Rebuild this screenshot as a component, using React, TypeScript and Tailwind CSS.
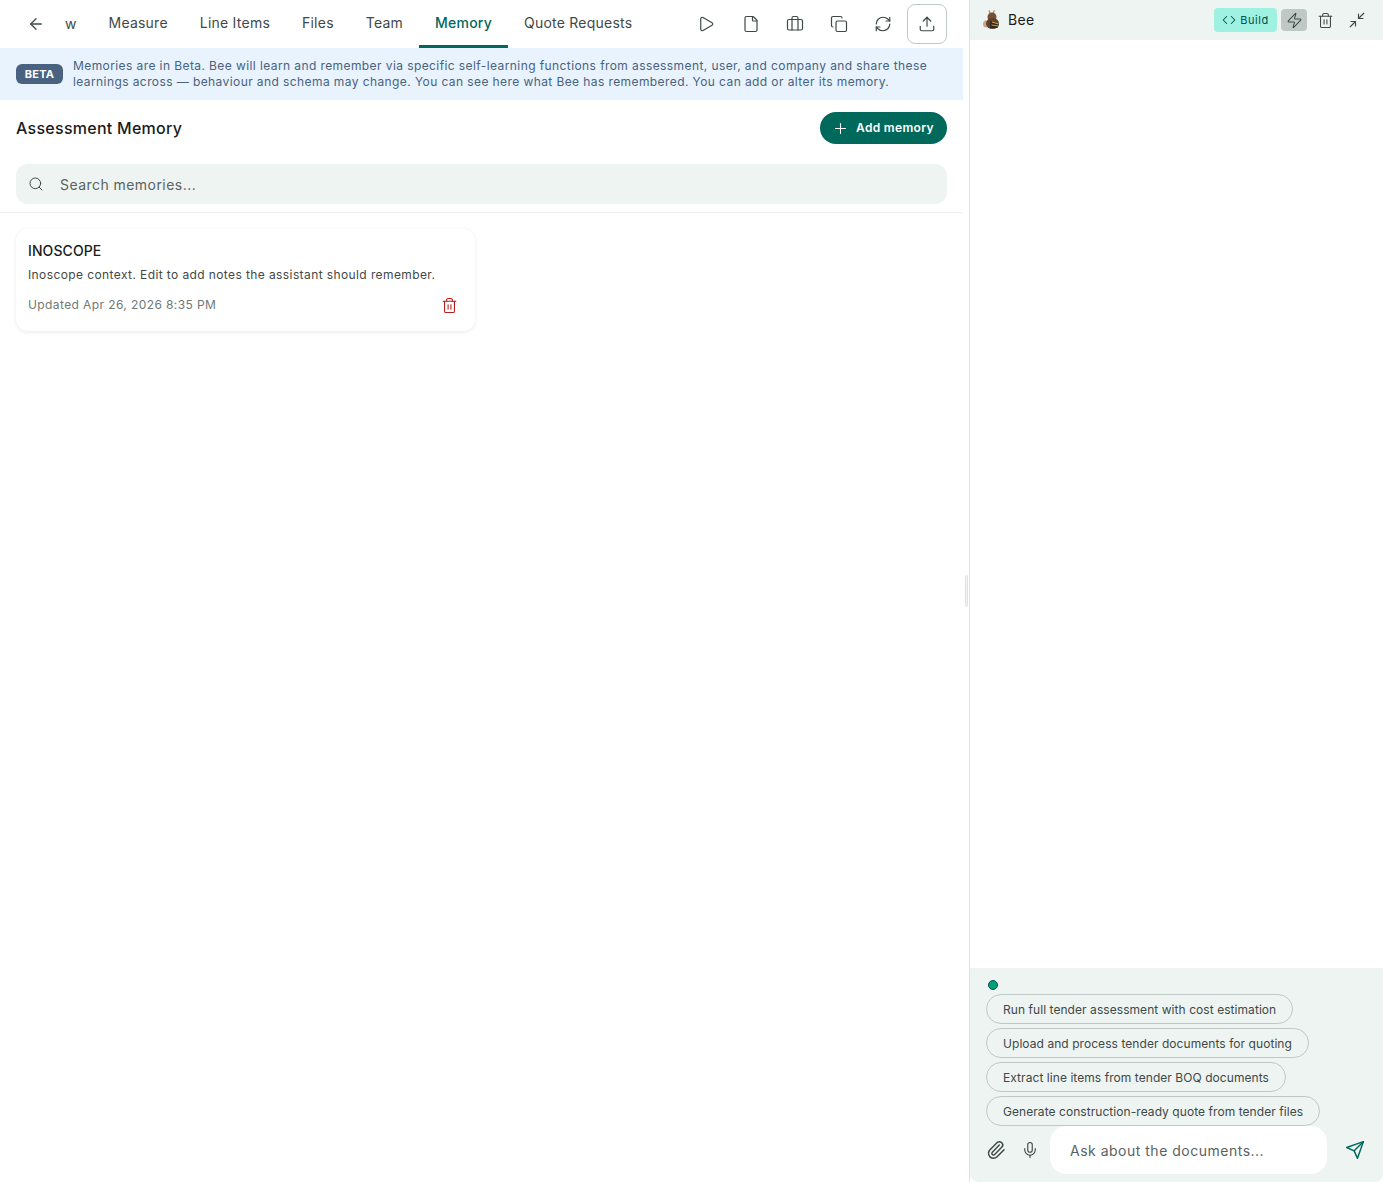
import { ArrowLeft, Briefcase, Code, Copy, File, Mic, Minimize2, Paperclip, Play, Plus, RefreshCw, Search, Trash2, Upload, Zap } from "lucide-react";

const tabs = ["Measure", "Line Items", "Files", "Team"];
const prompts = [
  "Run full tender assessment with cost estimation",
  "Upload and process tender documents for quoting",
  "Extract line items from tender BOQ documents",
  "Generate construction-ready quote from tender files",
];

function BeeLogo() {
  return (
    <svg width="20" height="22" viewBox="0 0 20 22" className="shrink-0">
      <path d="M8 4 L7 1.5 M11 4 L12.5 1.5" stroke="#b8862d" strokeWidth="1.2" fill="none" />
      <ellipse cx="4" cy="15" rx="3" ry="3.5" fill="#c9a58c" />
      <ellipse cx="10" cy="8" rx="4.5" ry="4.5" fill="#7a4e34" />
      <ellipse cx="10.5" cy="14.5" rx="6.5" ry="5.5" fill="#63402b" />
      <path d="M8 12 L17 15 L15.5 19 L8 19 Z" fill="#2b2a28" />
      <path d="M10 13 L16.5 15 M9.5 16 L16.5 17" stroke="#d29a2c" strokeWidth="1.2" fill="none" />
    </svg>
  );
}

function SendIcon() {
  return (
    <svg width="20" height="20" viewBox="0 0 24 24" fill="none" stroke="#00695c" strokeWidth="1.75" strokeLinejoin="round" strokeLinecap="round" className="ml-[18px]">
      <path d="M22 2 15 22l-4-9-9-4Z" />
      <path d="M22 2 11 13" />
    </svg>
  );
}

export default function App() {
  return (
    <div className="flex h-[1182px] w-[1383px] overflow-hidden bg-white font-['Inter',sans-serif] antialiased">
      <div className="flex h-full w-[963px] shrink-0 flex-col">
        <div className="flex h-12 items-center">
          <ArrowLeft size={18} strokeWidth={1.75} className="ml-[27px] text-[#3f4947]" />
          <div className="ml-[20px] w-[11px] text-sm tracking-[0.23px] text-[#3f4947]">w</div>
          <div className="ml-[16.5px] flex h-full items-center">
            {tabs.map((t) => (
              <div key={t} className="flex h-full items-center px-4 pb-0.5 text-sm tracking-[0.23px] text-[#3f4947]">{t}</div>
            ))}
            <div className="flex h-full items-center border-b-[3px] border-[#00695c] px-4 text-sm font-medium tracking-[0.23px] text-[#00695c]">Memory</div>
            <div className="flex h-full items-center px-4 pb-0.5 text-sm tracking-[0.23px] text-[#3f4947]">Quote Requests</div>
          </div>
          <div className="ml-auto mr-4 flex items-center">
            <div className="flex w-[44px] justify-center"><Play size={18} strokeWidth={1.6} className="-translate-x-px text-[#3f4947]" /></div>
            <div className="flex w-[44px] justify-center"><File size={18} strokeWidth={1.6} className="text-[#3f4947]" /></div>
            <div className="flex w-[44px] justify-center"><Briefcase size={18} strokeWidth={1.6} className="text-[#3f4947]" /></div>
            <div className="flex w-[44px] justify-center"><Copy size={18} strokeWidth={1.6} className="text-[#3f4947]" /></div>
            <div className="flex w-[44px] justify-center"><RefreshCw size={18} strokeWidth={1.6} className="text-[#3f4947]" /></div>
            <div className="ml-[2px] flex h-10 w-10 items-center justify-center rounded-lg border border-[#bfc9c6]"><Upload size={18} strokeWidth={1.6} className="text-[#3f4947]" /></div>
          </div>
        </div>
        <div className="flex h-[52px] items-center gap-[10px] bg-[#e8f3fd] px-4">
          <div className="flex h-5 w-[47px] shrink-0 items-center justify-center rounded-md bg-[#48627f] text-[11px] font-bold tracking-[0.2px] text-white">BETA</div>
          <div className="text-xs leading-4 tracking-[0.41px] text-[#48627f]">
            Memories are in Beta. Bee will learn and remember via specific self-learning functions from assessment, user, and company and share these learnings across — behaviour and schema may change. You can see here what Bee has remembered. You can add or alter its memory.
          </div>
        </div>
        <div className="flex items-center justify-between px-4 pt-3">
          <div className="text-base font-medium tracking-[0.27px] text-[#191c1b]">Assessment Memory</div>
          <div className="flex h-8 w-[127px] items-center gap-[7px] rounded-full bg-[#00695c] pl-[12px] text-xs font-semibold tracking-[0.33px] text-white">
            <Plus size={17} strokeWidth={1.5} />
            Add memory
          </div>
        </div>
        <div className="px-4 pt-5">
          <div className="flex h-10 items-center rounded-xl bg-[#eef4f2] pl-3 text-sm tracking-[0.45px] text-[#5a6361]">
            <Search size={16} strokeWidth={1.5} className="mr-4 text-[#3f4947]" />
            <span className="pt-[2px]">Search memories...</span>
          </div>
        </div>
        <div className="mt-2 h-px bg-[#eef1f0]" />
        <div className="px-4 pt-4">
          <div className="h-[102px] w-[459px] rounded-xl bg-white px-3 pt-3 shadow-[0_1px_4px_rgba(0,0,0,0.09)]">
            <div className="text-sm font-medium leading-5 tracking-[0.1px] text-[#191c1b]">INOSCOPE</div>
            <div className="mt-[6px] text-xs leading-4 tracking-[0.4px] text-[#3f4947]">Inoscope context. Edit to add notes the assistant should remember.</div>
            <div className="mt-[8px] flex h-7 items-center justify-between pr-[5px]">
              <div className="text-xs tracking-[0.4px] text-[#6f7977]">Updated Apr 26, 2026 8:35 PM</div>
              <Trash2 size={17} strokeWidth={1.5} className="text-[#ba1a1a]" />
            </div>
          </div>
        </div>
      </div>
      <div className="flex w-[6px] shrink-0 items-center justify-center">
        <div className="h-8 w-[3px] rounded-full border border-[#e0e3e2] bg-[#f1f3f2]" />
      </div>
      <div className="flex h-full flex-1 flex-col border-l border-[#e0e3e2]">
        <div className="flex h-10 items-center bg-[#eef4f2] pl-[12px]">
          <BeeLogo />
          <div className="ml-[6px] text-sm tracking-[0.4px] text-[#191c1b]">Bee</div>
          <div className="ml-auto flex h-6 w-[63px] items-center justify-center gap-1 rounded bg-[#9ff2e2] text-[11px] tracking-[0.5px] text-[#00504a]">
            <Code size={14} strokeWidth={1.75} />
            Build
          </div>
          <div className="ml-1 flex h-[22px] w-[26px] items-center justify-center rounded bg-[#bec9c6]">
            <Zap size={17} strokeWidth={1.5} className="text-[#3f4947]" />
          </div>
          <div className="flex w-[36px] justify-center"><Trash2 size={17} strokeWidth={1.5} className="text-[#3f4947]" /></div>
          <div className="mr-[12px] flex w-[28px] justify-center"><Minimize2 size={18} strokeWidth={1.5} className="text-[#3f4947]" /></div>
        </div>
        <div className="flex-1" />
        <div className="flex h-[214px] flex-col rounded-b-lg bg-[#eef4f2] px-4">
          <div className="ml-[2px] mt-[12px] h-2.5 w-2.5 rounded-full border border-[#00504a] bg-[#00a078]" />
          <div className="mt-[4px] flex flex-col items-start gap-1">
            {prompts.map((p) => (
              <div key={p} className="flex h-[30px] items-center rounded-full border border-[#bec9c6] px-4 pt-[2px] text-xs tracking-[0.06px] text-[#3f4947]">{p}</div>
            ))}
          </div>
          <div className="flex items-center">
            <Paperclip size={20} strokeWidth={1.75} className="text-[#3f4947]" />
            <Mic size={18} strokeWidth={1.5} className="ml-[15px] text-[#3f4947]" />
            <div className="ml-[11px] flex h-12 w-[277px] items-center rounded-2xl bg-white pl-5 pt-[2px] text-sm tracking-[0.5px] text-[#5a6361]">Ask about the documents...</div>
            <SendIcon />
          </div>
        </div>
      </div>
    </div>
  );
}
